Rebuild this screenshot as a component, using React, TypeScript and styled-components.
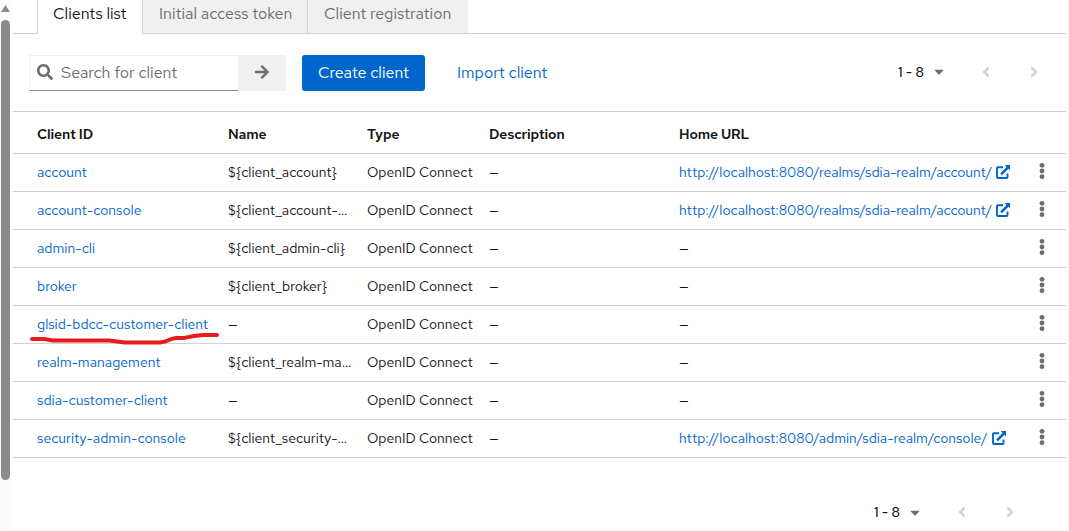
import React from "react";
import styled, { createGlobalStyle } from "styled-components";
import { FaSearch, FaArrowRight, FaCaretDown, FaAngleLeft, FaAngleRight } from "react-icons/fa";

const Global = createGlobalStyle`
  * { box-sizing: border-box; }
  body { margin: 0; background: #fff; overflow: hidden; }
`;

const Page = styled.div`
  display: grid;
  grid-template-columns: 13px 1053px 3px;
  width: 1069px;
  height: 531px;
  overflow: hidden;
  font-family: "Red Hat Text", "Noto Sans", sans-serif;
  font-size: 14px;
  color: #151515;
`;

const ScrollTrack = styled.div`
  display: flex;
  flex-direction: column;
  align-items: center;
  padding: 5px 3px 0 1px;
  background: #fcfcfc;
`;

const ScrollArrow = styled.svg`
  display: block;
  width: 9px;
  height: 7px;
  fill: #8b8b8b;
`;

const ScrollThumb = styled.div`
  width: 9px;
  height: 460px;
  margin-top: 8px;
  border-radius: 4.5px;
  background: #8b8b8b;
`;

const Edge = styled.div`
  background: #fafafa;
`;

const Main = styled.main`
  display: flex;
  flex-direction: column;
  min-width: 0;
`;

const Tabs = styled.nav`
  display: flex;
  height: 34px;
  padding-left: 24px;
  box-shadow: inset 0 -1px #d2d2d2;
`;

const Tab = styled.div<{ $width: number; $active?: boolean; $divided?: boolean }>`
  width: ${(p) => p.$width}px;
  height: ${(p) => (p.$active ? 34 : 33)}px;
  padding-left: ${(p) => (p.$active ? 15 : 16)}px;
  font-size: 16px;
  line-height: 27px;
  white-space: nowrap;
  color: ${(p) => (p.$active ? "#151515" : "#6a6e73")};
  background: ${(p) => (p.$active ? "#fff" : "#f0f0f0")};
  border-left: ${(p) => (p.$active ? "1px solid #d2d2d2" : "0")};
  border-right: ${(p) => (p.$divided ? "1px solid #d2d2d2" : "0")};
`;

const Toolbar = styled.div`
  display: flex;
  align-items: center;
  height: 77px;
  padding: 0 27px 0 16px;
`;

const SearchBox = styled.div`
  display: flex;
  align-items: center;
  width: 209px;
  height: 36px;
  padding-left: 7px;
  font-size: 16px;
  color: #6a6e73;
  border: 1px solid #f0f0f0;
  border-right: 0;
  border-bottom-color: #8a8d90;

  svg { margin-bottom: 2px; }
`;

const Placeholder = styled.span`
  margin-left: 8px;
  white-space: nowrap;
`;

const SearchSubmit = styled.div`
  display: flex;
  align-items: center;
  justify-content: center;
  width: 48px;
  height: 36px;
  padding-bottom: 2px;
  font-size: 16px;
  color: #6a6e73;
  background: #f0f0f0;
`;

const Button = styled.div<{ $primary?: boolean }>`
  display: flex;
  align-items: center;
  height: 36px;
  width: ${(p) => (p.$primary ? 123 : 122)}px;
  margin-left: 16px;
  padding-left: 16px;
  border-radius: 3px;
  font-size: 16px;
  white-space: nowrap;
  color: ${(p) => (p.$primary ? "#fff" : "#0066cc")};
  background: ${(p) => (p.$primary ? "#0066cc" : "transparent")};
`;

const Pager = styled.div`
  display: flex;
  align-items: center;
  margin-left: auto;
  padding-bottom: 2px;
  color: #d2d2d2;
  font-size: 16px;
`;

const Range = styled.span`
  width: 36px;
  font-size: 14px;
  font-weight: 500;
  color: #151515;
  white-space: nowrap;
`;

const PagerIcon = styled.span<{ $gap?: number; $dark?: boolean }>`
  display: flex;
  width: 10px;
  justify-content: center;
  margin-left: ${(p) => p.$gap ?? 0}px;
  color: ${(p) => (p.$dark ? "#6a6e73" : "#d2d2d2")};
`;

const Table = styled.div`
  border-top: 1px solid #d2d2d2;
`;

const Row = styled.div<{ $head?: boolean }>`
  display: grid;
  grid-template-columns: 191px 139px 122px 190px 355px 16px;
  align-items: center;
  height: ${(p) => (p.$head ? 42 : 38)}px;
  padding-left: 24px;
  padding-top: ${(p) => (p.$head ? 3 : 0)}px;
  padding-bottom: ${(p) => (p.$head ? 0 : 1)}px;
  border-bottom: 1px solid #d2d2d2;
  font-weight: ${(p) => (p.$head ? 600 : 400)};
  letter-spacing: ${(p) => (p.$head ? -0.12 : 0)}px;
`;

const Cell = styled.div<{ $link?: boolean; $tight?: boolean }>`
  display: flex;
  align-items: center;
  position: relative;
  line-height: 20px;
  white-space: nowrap;
  letter-spacing: ${(p) => (p.$tight ? "-0.02px" : "inherit")};
  color: ${(p) => (p.$link ? "#0066cc" : "#151515")};
`;

const ExternalIcon = styled.svg`
  width: 14px;
  height: 14px;
  margin-left: 4px;
`;

const Kebab = styled.svg`
  width: 6px;
  height: 18px;
  margin: 0 0 2px 5px;
  fill: #6a6e73;
`;

const Marker = styled.svg`
  position: absolute;
  left: -10px;
  top: 16px;
  width: 196px;
  height: 18px;
  fill: none;
  stroke: #e81c1c;
  stroke-width: 4;
  stroke-linecap: round;
  stroke-linejoin: round;
`;

const Footer = styled.div`
  display: flex;
  align-items: center;
  height: 36px;
  margin-top: 37px;
  padding-right: 51px;
`;

type Client = {
  id: string;
  name: string;
  url?: string;
  marked?: boolean;
};

const accountUrl = "http://localhost:8080/realms/sdia-realm/account/";
const consoleUrl = "http://localhost:8080/admin/sdia-realm/console/";

const clients: Client[] = [
  { id: "account", name: "${client_account}", url: accountUrl },
  { id: "account-console", name: "${client_account-…", url: accountUrl },
  { id: "admin-cli", name: "${client_admin-cli}" },
  { id: "broker", name: "${client_broker}" },
  { id: "glsid-bdcc-customer-client", name: "—", marked: true },
  { id: "realm-management", name: "${client_realm-ma…" },
  { id: "sdia-customer-client", name: "—" },
  { id: "security-admin-console", name: "${client_security-…", url: consoleUrl },
];

const Pagination = () => (
  <Pager>
    <Range>1 - 8</Range>
    <PagerIcon $dark><FaCaretDown size={15} /></PagerIcon>
    <PagerIcon $gap={37}><FaAngleLeft /></PagerIcon>
    <PagerIcon $gap={38}><FaAngleRight /></PagerIcon>
  </Pager>
);

export default function App() {
  return (
    <>
      <Global />
      <Page>
        <ScrollTrack>
          <ScrollArrow viewBox="0 0 9 7"><path d="M4.5 0 9 7H0Z" /></ScrollArrow>
          <ScrollThumb />
        </ScrollTrack>
        <Main>
          <Tabs>
            <Tab $width={106} $active $divided>Clients list</Tab>
            <Tab $width={165} $divided>Initial access token</Tab>
            <Tab $width={160}>Client registration</Tab>
          </Tabs>
          <Toolbar>
            <SearchBox>
              <FaSearch />
              <Placeholder>Search for client</Placeholder>
            </SearchBox>
            <SearchSubmit><FaArrowRight /></SearchSubmit>
            <Button $primary>Create client</Button>
            <Button>Import client</Button>
            <Pagination />
          </Toolbar>
          <Table>
            <Row $head>
              <Cell>Client ID</Cell>
              <Cell>Name</Cell>
              <Cell>Type</Cell>
              <Cell>Description</Cell>
              <Cell>Home URL</Cell>
            </Row>
            {clients.map((c) => (
              <Row key={c.id}>
                <Cell $link>
                  {c.id}
                  {c.marked && (
                    <Marker viewBox="0 0 196 18">
                      <path d="M5 9H17L26 10.500H82L98 12.500H133C142 11.500 142 8.500 149 8H157C166 6 170 5 177 5H190" />
                    </Marker>
                  )}
                </Cell>
                <Cell $tight>{c.name}</Cell>
                <Cell>OpenID Connect</Cell>
                <Cell>—</Cell>
                <Cell $link={!!c.url} $tight>
                  {c.url ?? "—"}
                  {c.url && (
                    <ExternalIcon viewBox="0 0 14 14">
                      <path d="M7 2.200H1.900Q1 2.200 1 3.100V12.100Q1 13 1.900 13H10.600Q11.500 13 11.500 12.100V8.500" fill="none" stroke="#0066cc" strokeWidth="1.900" />
                      <path d="M8.700 0H14V5.300L12.400 3.800 6 10.200 4.200 8.400 10.500 1.900Z" fill="#0066cc" />
                    </ExternalIcon>
                  )}
                </Cell>
                <Kebab viewBox="0 0 6 18"><circle cx="3" cy="3.300" r="2.400" /><circle cx="3" cy="9" r="2.400" /><circle cx="3" cy="14.700" r="2.400" /></Kebab>
              </Row>
            ))}
          </Table>
          <Footer><Pagination /></Footer>
        </Main>
        <Edge />
      </Page>
    </>
  );
}
